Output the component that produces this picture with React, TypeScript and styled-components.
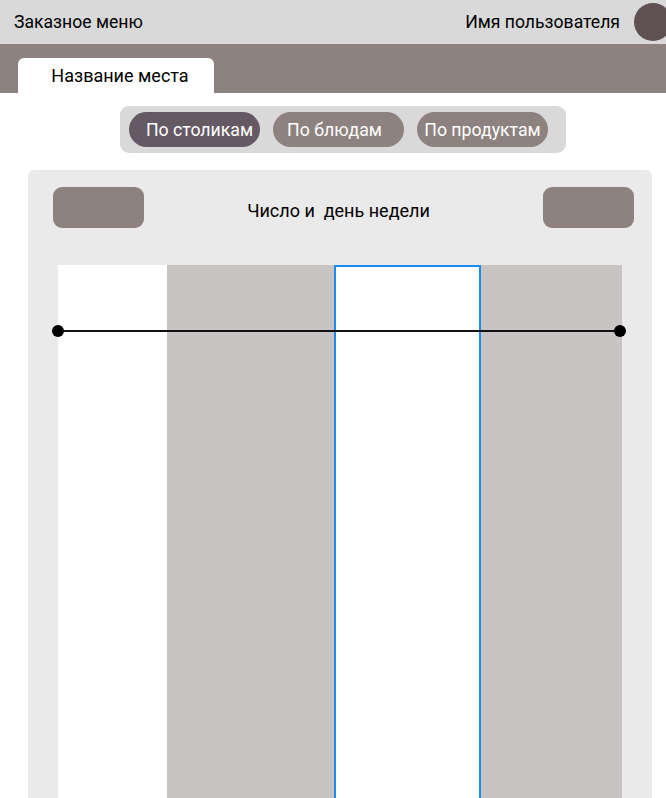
import React from "react";
import styled, { createGlobalStyle } from "styled-components";

const Global = createGlobalStyle`
  html, body { margin: 0; padding: 0; background: #ffffff; overflow: hidden; }
  body { font-family: Roboto, "Noto Sans", sans-serif; color: #000; }
  * { box-sizing: border-box; }
`;

const Page = styled.div`
  width: 666px;
  height: 798px;
  overflow: hidden;
  display: flex;
  flex-direction: column;
`;

const Header = styled.header`
  height: 44px;
  flex: none;
  background: #d9d9d9;
  display: flex;
  align-items: center;
  justify-content: space-between;
  padding-left: 14px;
  font-size: 17.6px;
`;

const UserBox = styled.div`
  display: flex;
  align-items: center;
  gap: 14px;
  margin-right: -6px;
`;

const Avatar = styled.div`
  width: 38px;
  height: 38px;
  border-radius: 50%;
  background: #5f5152;
`;

const TabBar = styled.nav`
  height: 49px;
  flex: none;
  background: #8e8280;
  display: flex;
  align-items: flex-end;
  padding-left: 18px;
`;

const Tab = styled.div`
  width: 196px;
  height: 35px;
  background: #ffffff;
  border-radius: 6px 6px 0 0;
  display: flex;
  align-items: center;
  justify-content: center;
  padding-left: 8px;
  font-size: 18px;
`;

const Segment = styled.div`
  align-self: flex-start;
  margin: 13px 0 0 120px;
  display: flex;
  gap: 13px;
  padding: 6px 18px 6px 9px;
  background: #d9d9d9;
  border-radius: 9px;
`;

const SegButton = styled.button<{ $active?: boolean; $shift?: number }>`
  width: 131px;
  height: 35px;
  border: none;
  border-radius: 18px;
  background: ${(p) => (p.$active ? "#655a64" : "#8e8280")};
  color: #ffffff;
  font-family: inherit;
  font-size: 17.7px;
  padding: 0;
  padding-left: ${(p) => Math.max(0, p.$shift ?? 0) * 2}px;
  padding-right: ${(p) => Math.max(0, -(p.$shift ?? 0)) * 2}px;
  display: flex;
  align-items: center;
  justify-content: center;
  white-space: nowrap;
`;

const Card = styled.section`
  margin: 17px 14px 0 28px;
  background: #eaeaea;
  border-radius: 6px;
  padding: 17px 18px 0 25px;
  flex: 1;
  display: flex;
  flex-direction: column;
`;

const DayRow = styled.div`
  display: flex;
  align-items: center;
  justify-content: space-between;
`;

const NavButton = styled.button`
  width: 91px;
  height: 41px;
  border: none;
  border-radius: 9px;
  background: #8e8280;
  padding: 0;
`;

const DayTitle = styled.div`
  font-size: 18px;
  white-space: pre;
  padding: 5px 10px 0 0;
`;

const Chart = styled.div`
  position: relative;
  margin: 37px 12px 0 5px;
  height: 560px;
  display: flex;
  flex: none;
`;

const Column = styled.div<{ $w: number; $shade?: boolean; $selected?: boolean }>`
  width: ${(p) => p.$w}px;
  flex: none;
  background: ${(p) => (p.$shade ? "#c9c4c4" : "#ffffff")};
  ${(p) =>
    p.$selected
      ? "border: 2px solid #1a8cf0; border-bottom: none;"
      : ""}
`;

const TimeLine = styled.div`
  position: absolute;
  left: -1px;
  right: 1px;
  top: 65px;
  height: 2px;
  background: #111;
`;

const Dot = styled.span<{ $side: "left" | "right" }>`
  position: absolute;
  top: -5px;
  ${(p) => p.$side}: -5px;
  width: 12px;
  height: 12px;
  border-radius: 50%;
  background: #000;
`;

export default function App() {
  return (
    <Page>
      <Global />
      <Header>
        <span>Заказное меню</span>
        <UserBox>
          <span>Имя пользователя</span>
          <Avatar />
        </UserBox>
      </Header>
      <TabBar>
        <Tab>Название места</Tab>
      </TabBar>
      <Segment>
        <SegButton $active $shift={5}>По столикам</SegButton>
        <SegButton $shift={-4}>По блюдам</SegButton>
        <SegButton>По продуктам</SegButton>
      </Segment>
      <Card>
        <DayRow>
          <NavButton />
          <DayTitle>Число и  день недели</DayTitle>
          <NavButton />
        </DayRow>
        <Chart>
          <Column $w={109} />
          <Column $w={167} $shade />
          <Column $w={147} $selected />
          <Column $w={141} $shade />
          <TimeLine>
            <Dot $side="left" />
            <Dot $side="right" />
          </TimeLine>
        </Chart>
      </Card>
    </Page>
  );
}
